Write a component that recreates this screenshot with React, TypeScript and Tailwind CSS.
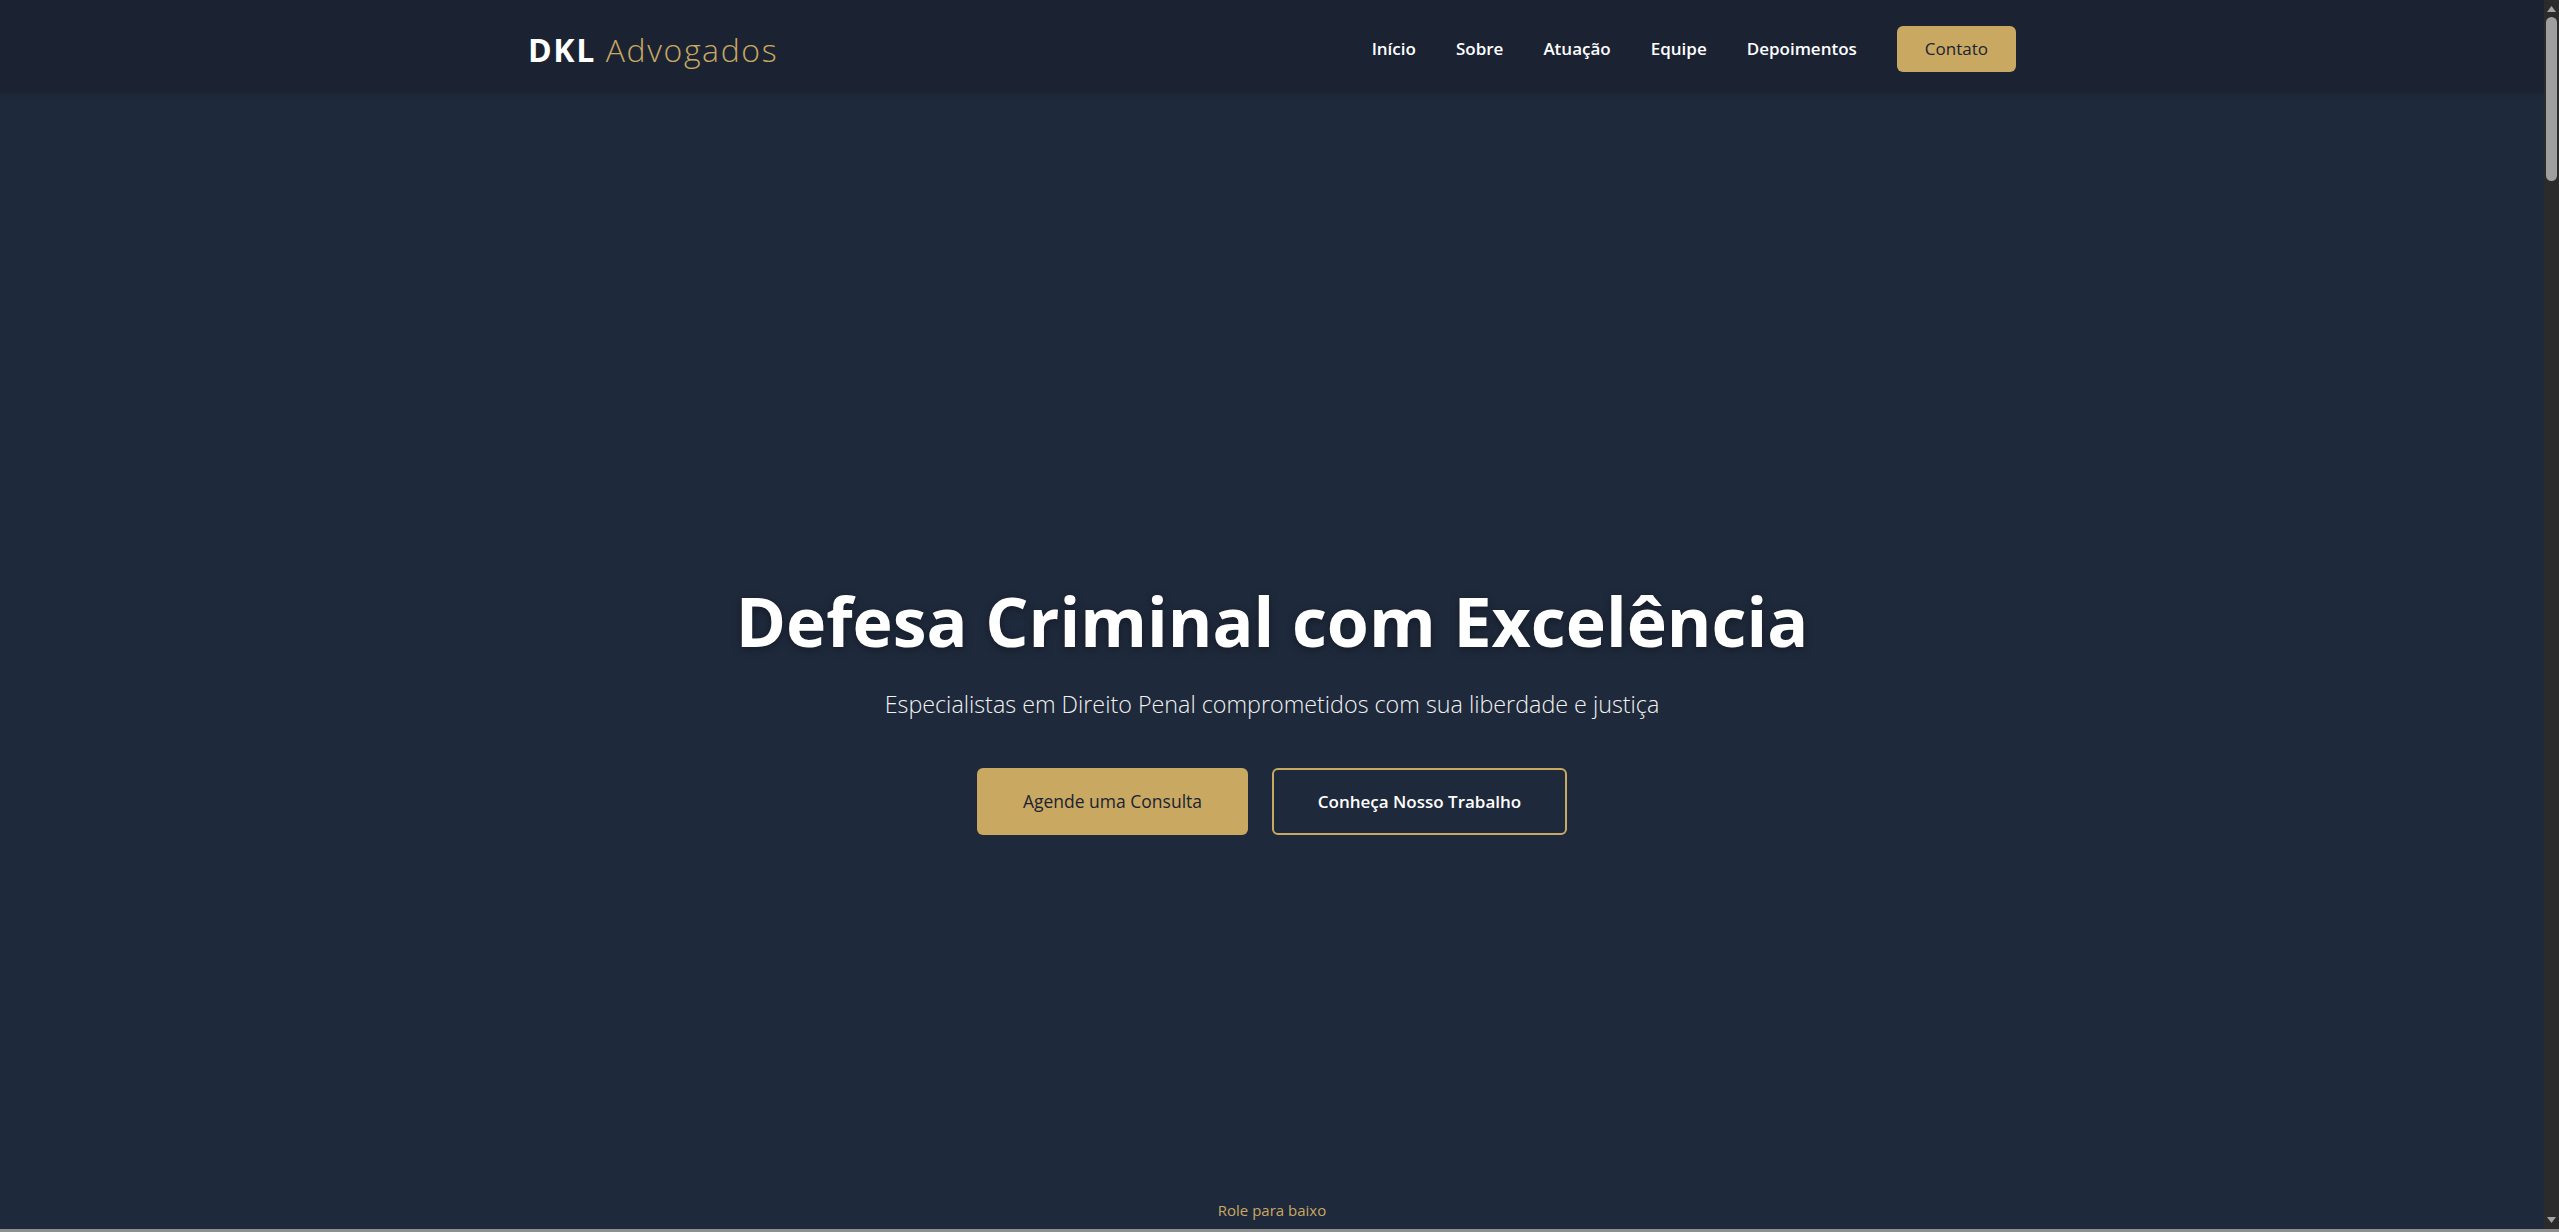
const navLinks = ['Início', 'Sobre', 'Atuação', 'Equipe', 'Depoimentos'];

function Scrollbar() {
  return (
    <aside className="w-[15px] shrink-0 bg-[#2b2b2b] flex flex-col items-center">
      <svg width="9" height="6" viewBox="0 0 9 6" className="mt-[6px] fill-[#a3a3a3]">
        <path d="M4.5 0 9 6H0z" />
      </svg>
      <div className="mt-[5px] w-[11px] h-[164px] rounded-full bg-[#9f9f9f]" />
      <div className="flex-1" />
      <svg width="9" height="6" viewBox="0 0 9 6" className="mb-[6px] fill-[#a3a3a3]">
        <path d="M0 0h9L4.5 6z" />
      </svg>
    </aside>
  );
}

export default function App() {
  return (
    <div className="h-screen flex flex-col overflow-hidden font-['Open_Sans',sans-serif]">
      <div className="flex-1 min-h-0 flex">
        <main className="flex-1 min-w-0 overflow-hidden bg-[#1e293b] text-white">
          {/* Header */}
          <header className="bg-[#1b2333] shadow-[0_2px_6px_rgba(0,0,0,0.15)]">
            <div className="max-w-[1536px] mx-auto px-6 h-[92px] pt-[5px] flex items-center justify-between">
              <a href="#" className="text-[32px] leading-none tracking-wider pt-[2px]">
                <span className="font-bold text-white">DKL</span>{' '}
                <span className="font-light text-[#c9a862]">Advogados</span>
              </a>
              <nav className="flex items-center gap-10">
                {navLinks.map((l) => (
                  <a key={l} href="#" className="text-[17px] font-semibold text-white">
                    {l}
                  </a>
                ))}
                <a
                  href="#"
                  className="h-[46px] px-[28px] flex items-center rounded-md bg-[#c9a862] text-[#1b2333] text-[17px] font-medium"
                >
                  Contato
                </a>
              </nav>
            </div>
          </header>

          {/* Hero */}
          <section className="h-[1137px] flex flex-col items-center">
            <div className="flex-1 flex flex-col items-center pt-[495px]">
              <h1 className="text-[68px] leading-none font-bold text-white [text-shadow:0_2px_8px_rgba(0,0,0,0.35)]">
                Defesa Criminal com Excelência
              </h1>
              <p className="mt-[32px] text-[23.3px] font-light text-[#f1f1f1]">
                Especialistas em Direito Penal comprometidos com sua liberdade e justiça
              </p>
              <div className="mt-[46px] flex gap-6">
                <a
                  href="#"
                  className="w-[271px] h-[67px] flex items-center justify-center rounded-md bg-[#c9a862] text-[#1b2333] text-[17.5px] font-medium"
                >
                  Agende uma Consulta
                </a>
                <a
                  href="#"
                  className="w-[295px] h-[67px] flex items-center justify-center rounded-md border-2 border-[#c9a862] text-white text-[17px] font-semibold"
                >
                  Conheça Nosso Trabalho
                </a>
              </div>
            </div>
            <p className="pb-[8px] text-[15px] text-[#c9a862]">Role para baixo</p>
          </section>
        </main>
        <Scrollbar />
      </div>
      <div className="h-[3px] bg-[#8f8f8f]" />
    </div>
  );
}
